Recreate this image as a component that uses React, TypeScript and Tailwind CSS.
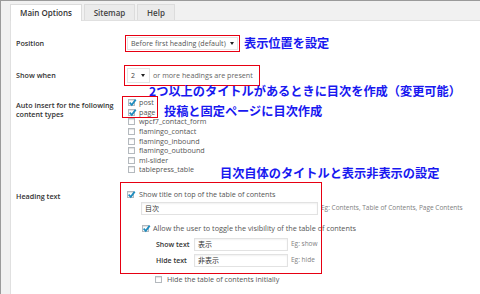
import React from "react";

const OS = "font-['Open_Sans','Noto_Sans_CJK_JP',sans-serif]";
const JP = "font-['Noto_Sans_CJK_JP',sans-serif]";

function Check({ checked }: { checked?: boolean }) {
  return (
    <span className="relative inline-block w-[7px] h-[7px] shrink-0 border border-[#b4b9be] bg-white shadow-[inset_0_1px_1px_rgba(0,0,0,0.12)]">
      {checked && (
        <svg className="absolute left-[-1px] top-[-2px] w-[9px] h-[9px]" viewBox="0 0 10 10">
          <path d="M1.8 5.2 L4.2 7.6 L8.6 1.8" stroke="#1e8cbe" strokeWidth="1.9" fill="none" />
        </svg>
      )}
    </span>
  );
}

function Item({ label, checked }: { label: string; checked?: boolean }) {
  return (
    <div className="flex items-center h-[9.6px] gap-[4px] pl-[6px]">
      <Check checked={checked} />
      <span className="text-[7.2px] leading-none text-[#555]">{label}</span>
    </div>
  );
}

function Arrow() {
  return (
    <svg className="w-[4px] h-[3px] shrink-0" viewBox="0 0 4 3">
      <path d="M0 0 L4 0 L2 3 Z" fill="#222" />
    </svg>
  );
}

export default function App() {
  return (
    <div className={`relative w-[480px] h-[294px] overflow-hidden bg-[#f1f1f1] border-t border-l border-[#9a9a9a] ${OS}`}>
      {/* tabs */}
      <div className="flex items-end h-[19px] pl-[9px] gap-[2px]">
        <div className="relative z-10 mb-[-1px] h-[17px] w-[72px] flex items-center justify-center bg-white border border-b-0 border-[#dcdcdc] text-[8px] font-semibold text-[#333]">
          Main Options
        </div>
        <div className="h-[16px] w-[51px] flex items-center justify-center bg-[#ebebeb] border border-b-0 border-[#dcdcdc] text-[8px] font-semibold text-[#444]">
          Sitemap
        </div>
        <div className="h-[16px] w-[38px] flex items-center justify-center bg-[#ebebeb] border border-b-0 border-[#dcdcdc] text-[8px] font-semibold text-[#444]">
          Help
        </div>
      </div>

      {/* panel */}
      <div className="ml-[9px] h-[274px] bg-white border-t border-l border-[#e0e0e0] pl-[5px]">
        {/* Position */}
        <div className="mt-[14px] h-[17px] flex items-center">
          <div className="w-[111px] text-[7.2px] font-semibold text-[#333] leading-none">Position</div>
          <div className="relative">
            <div className="w-[111px] h-[13px] flex items-center justify-between pl-[3px] pr-[3px] bg-white border border-[#e4e4e4]">
              <span className="text-[7.1px] text-[#555] leading-none whitespace-nowrap">Before first heading (default)</span>
              <Arrow />
            </div>
            <div className="absolute left-[-2px] top-[-2px] w-[115px] h-[17px] border border-[#e60012] pointer-events-none" />
          </div>
          <span className={`ml-[6px] text-[12.2px] font-bold leading-none text-[#1818f0] ${JP}`}>表示位置を設定</span>
        </div>

        {/* Show when */}
        <div className="mt-[13px] h-[21px] flex items-center">
          <div className="w-[111px] text-[7.2px] font-semibold text-[#333] leading-none">Show when</div>
          <div className="relative flex items-center h-[21px]">
            <div className="w-[23px] h-[15px] flex items-center justify-between pl-[3px] pr-[4px] bg-white border border-[#e4e4e4]">
              <span className="text-[7px] text-[#444] leading-none">2</span>
              <Arrow />
            </div>
            <span className="ml-[3px] text-[7.2px] text-[#666] leading-none whitespace-nowrap">or more headings are present</span>
            <div className="absolute left-[-3px] top-0 w-[136px] h-[21px] border border-[#e60012] pointer-events-none" />
          </div>
        </div>

        {/* Auto insert */}
        <div className="mt-[10px] flex">
          <div className="w-[106px] pt-[4.5px] text-[7.2px] font-semibold text-[#333] leading-[9px]">
            Auto insert for the following
            <br />
            content types
          </div>
          <div className="relative pt-[2px]">
            <Item label="post" checked />
            <Item label="page" checked />
            <Item label="wpcf7_contact_form" />
            <Item label="flamingo_contact" />
            <Item label="flamingo_inbound" />
            <Item label="flamingo_outbound" />
            <Item label="ml-slider" />
            <Item label="tablepress_table" />
            <div className="absolute left-0 top-0 w-[36px] h-[22px] border border-[#e60012] pointer-events-none" />
          </div>
        </div>

        {/* Heading text */}
        <div className="mt-[7.2px] flex">
          <div className="w-[111px] pt-[10.2px] text-[7.2px] font-semibold text-[#333] leading-[9px]">Heading text</div>
          <div className="relative pt-[7.5px]">
            <div className="flex items-center h-[9.6px] gap-[5px]">
              <Check checked />
              <span className="text-[7.2px] leading-none text-[#555] whitespace-nowrap">Show title on top of the table of contents</span>
            </div>
            <div className="mt-[2.5px] ml-[14px] flex items-center">
              <div className="w-[177px] h-[13px] flex items-center pl-[3px] bg-white border border-[#e2e2e2] shadow-[inset_0_1px_2px_rgba(0,0,0,0.06)]">
                <span className={`text-[7px] leading-none text-[#333] ${JP}`}>目次</span>
              </div>
              <span className="ml-[3px] text-[6.5px] leading-none text-[#808080] whitespace-nowrap">Eg: Contents, Table of Contents, Page Contents</span>
            </div>
            <div className="mt-[9.5px] pl-[15px] flex items-center h-[9.6px] gap-[4px]">
              <Check checked />
              <span className="text-[7.3px] leading-none text-[#555] whitespace-nowrap">Allow the user to toggle the visibility of the table of contents</span>
            </div>
            <div className="mt-[4px] pl-[29px] flex items-center h-[13px]">
              <span className="w-[38px] text-[7px] font-semibold leading-none text-[#333] whitespace-nowrap">Show text</span>
              <div className="w-[94px] h-[13px] flex items-center pl-[3px] bg-white border border-[#e2e2e2] shadow-[inset_0_1px_2px_rgba(0,0,0,0.06)]">
                <span className={`text-[7px] leading-none text-[#333] ${JP}`}>表示</span>
              </div>
              <span className="ml-[3px] text-[6.5px] leading-none text-[#808080] whitespace-nowrap">Eg: show</span>
            </div>
            <div className="mt-[3px] pl-[29px] flex items-center h-[13px]">
              <span className="w-[38px] text-[7px] font-semibold leading-none text-[#333] whitespace-nowrap">Hide text</span>
              <div className="w-[94px] h-[13px] flex items-center pl-[3px] bg-white border border-[#e2e2e2] shadow-[inset_0_1px_2px_rgba(0,0,0,0.06)]">
                <span className={`text-[7px] leading-none text-[#333] ${JP}`}>非表示</span>
              </div>
              <span className="ml-[3px] text-[6.5px] leading-none text-[#808080] whitespace-nowrap">Eg: hide</span>
            </div>
            <div className="mt-[8px] pl-[28px] flex items-center h-[9.6px] gap-[5px]">
              <Check />
              <span className="text-[7.2px] leading-none text-[#555] whitespace-nowrap">Hide the table of contents initially</span>
            </div>
            <div className="absolute left-[-7px] top-0 w-[202px] h-[92px] border border-[#e60012] pointer-events-none" />
          </div>
        </div>
      </div>

      {/* callout annotations */}
      <div className={`absolute left-[148px] top-[83px] text-[12.2px] font-bold leading-[14px] text-[#1818f0] whitespace-nowrap ${JP}`}>
        2つ以上のタイトルがあるときに目次を作成（変更可能）
      </div>
      <div className={`absolute left-[163px] top-[104px] text-[12.2px] font-bold leading-[12px] text-[#1818f0] whitespace-nowrap ${JP}`}>
        投稿と固定ページに目次作成
      </div>
      <div className={`absolute left-[219px] top-[165px] text-[12.2px] font-bold leading-[14px] text-[#1818f0] whitespace-nowrap ${JP}`}>
        目次自体のタイトルと表示非表示の設定
      </div>
    </div>
  );
}
